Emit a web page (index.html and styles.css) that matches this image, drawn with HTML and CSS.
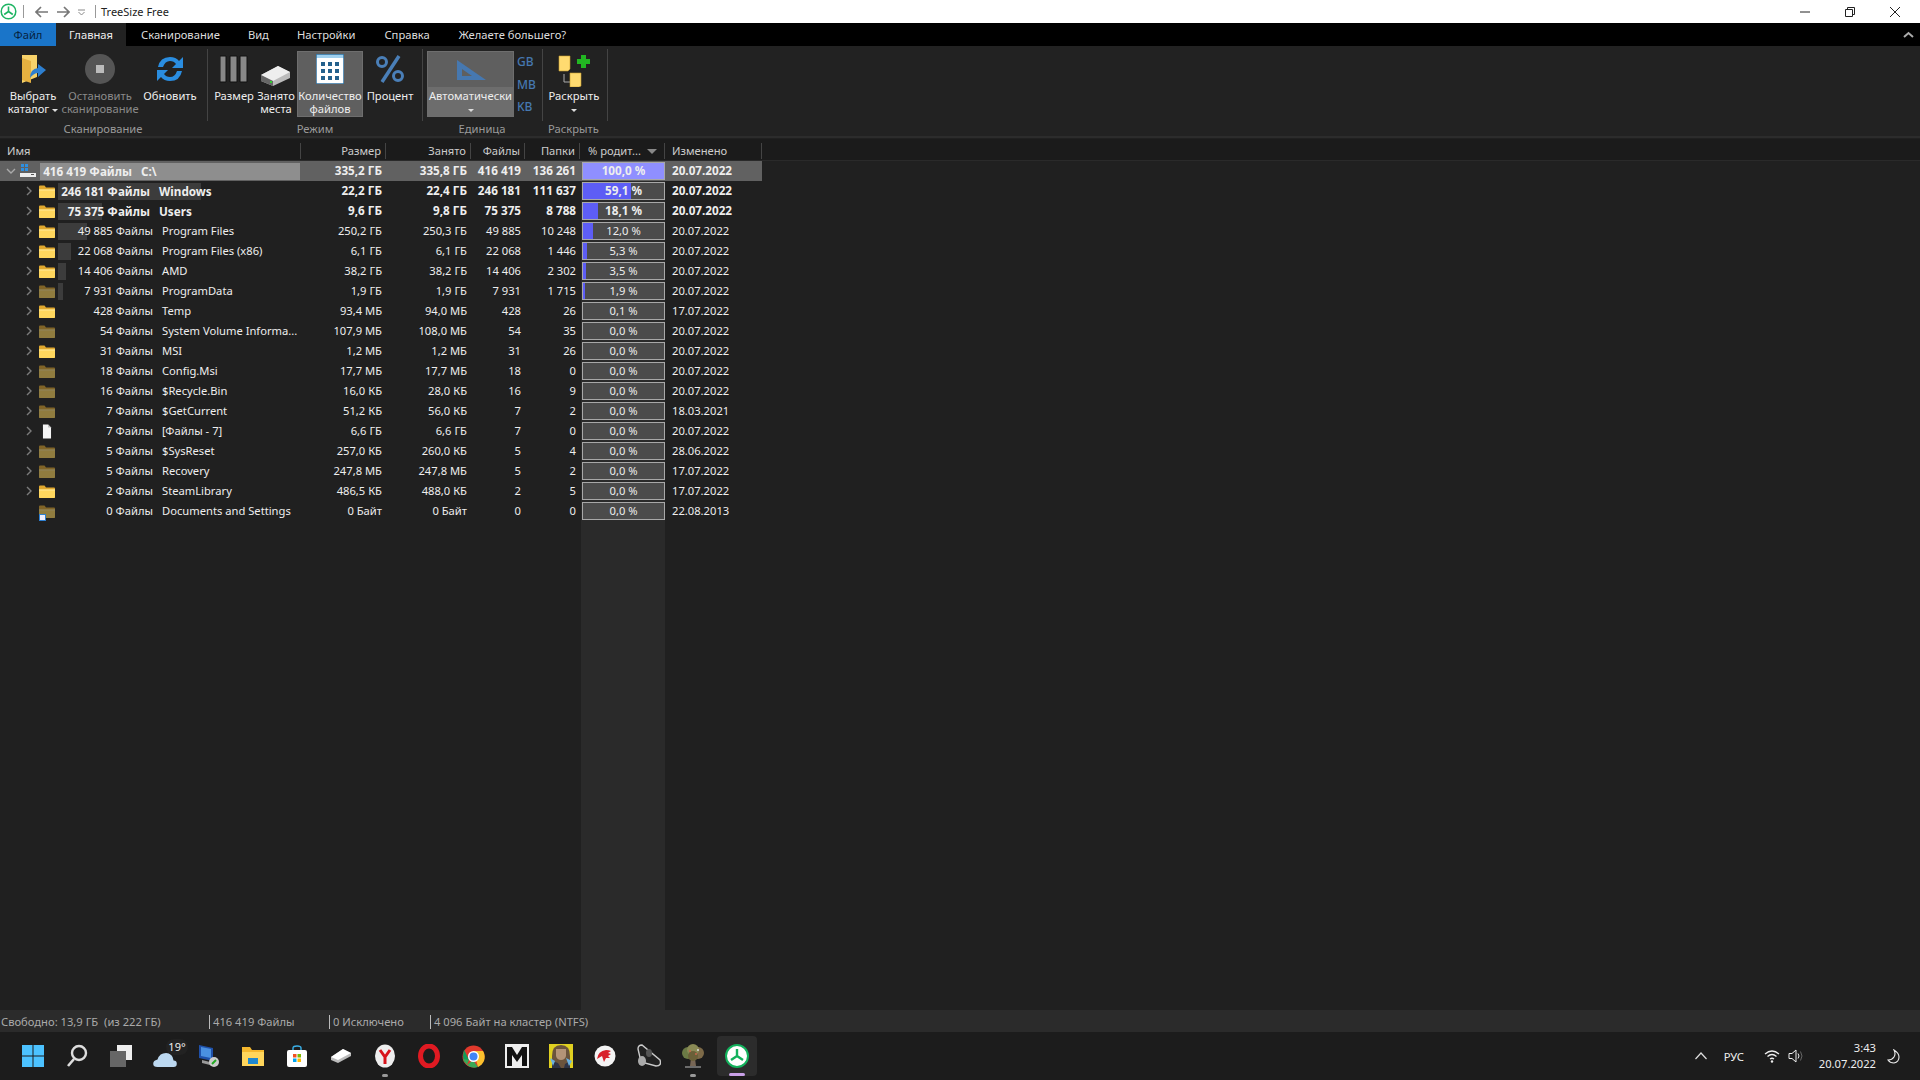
FILE: index.html
```html
<!DOCTYPE html>
<html lang="ru">
<head>
<meta charset="UTF-8" />
<title>TreeSize Free</title>
<link rel="stylesheet" href="styles.css">
</head>
<body>

<svg class="defs" width="0" height="0">
  <symbol id="folder" viewBox="0 0 16 13">
    <path d="M0 1.5q0-1 1-1h4.5l1.5 2h8q1 0 1 1V12q0 1-1 1H1q-1 0-1-1z" fill="#e0a82e"/>
    <path d="M0 4.5h16V12q0 1-1 1H1q-1 0-1-1z" fill="#ffd75e"/>
    <path d="M0 4.5h16v1H0z" fill="#ffe99a"/>
  </symbol>
  <symbol id="arrowRight" viewBox="0 0 7 10"><path d="M1 1l4 4-4 4" fill="none" stroke="#7b7b7b" stroke-width="1.4"/></symbol>
  <symbol id="doc" viewBox="0 0 16 26"><path d="M1 1h9l5 5v19H1z" fill="#f4f4f4"/><path d="M10 1v5h5z" fill="#bbb"/></symbol>
</svg>

<div class="titlebar">
  <svg class="appicon" width="17" height="17" viewBox="0 0 17 17"><circle cx="8.5" cy="8.5" r="7.3" fill="#fff" stroke="#1db462" stroke-width="1.5"/><path d="M8.5 3.5v5M8.5 8.5l-4.3 3M8.5 8.5l4.3 3" stroke="#1db462" stroke-width="1.6" fill="none"/></svg>
  <span class="tbsep"></span>
  <svg class="navarrow" width="14" height="12" viewBox="0 0 14 12"><path d="M6 1L1 6l5 5M1 6h12" fill="none" stroke="#777" stroke-width="1.7"/></svg>
  <svg class="navarrow" width="14" height="12" viewBox="0 0 14 12"><path d="M8 1l5 5-5 5M13 6H1" fill="none" stroke="#777" stroke-width="1.7"/></svg>
  <svg class="navdown" width="7" height="7" viewBox="0 0 7 7"><path d="M0 1h7M.5 3l3 3 3-3" fill="none" stroke="#888"/></svg>
  <span class="tbsep"></span>
  <span class="apptitle">TreeSize Free</span>
  <div class="wincontrols">
    <svg width="46" height="14" viewBox="0 0 46 14"><path d="M18 7h10" stroke="#222"/></svg>
    <svg width="46" height="14" viewBox="0 0 46 14"><path d="M18.500 4.500h7v7h-7zM20.500 4.500v-2h7v7h-2" fill="none" stroke="#222"/></svg>
    <svg width="46" height="14" viewBox="0 0 46 14"><path d="M18 2l10 10M28 2L18 12" stroke="#222"/></svg>
  </div>
</div>

<div class="tabbar">
  <span class="tab tabfile">Файл</span>
  <span class="tab tabactive">Главная</span>
  <span class="tab">Сканирование</span>
  <span class="tab">Вид</span>
  <span class="tab">Настройки</span>
  <span class="tab">Справка</span>
  <span class="tab">Желаете большего?</span>
  <svg class="collapse" width="11" height="7" viewBox="0 0 11 7"><path d="M1 6l4.500-4 4.500 4" fill="none" stroke="#aaa" stroke-width="2"/></svg>
</div>

<div class="ribbon">
  <div class="group groupscan">
    <div class="btns">
      <div class="rbtn wpick">
        <svg class="ricon" width="28" height="30" viewBox="0 0 28 30"><path d="M3 1h15v22L3 29z" fill="#f7d26a"/><path d="M3 4l9 3v22l-9-3z" fill="#e5b040"/><path d="M11 24q0-9 8-10v-4l8 6-8 7v-4q-4 0-8 5z" fill="#2d7fd0"/></svg>
        <span class="rtext">Выбрать<br>каталог <i class="caret"></i></span>
      </div>
      <div class="rbtn wstop disabled">
        <svg class="ricon" width="30" height="30" viewBox="0 0 30 30"><circle cx="15" cy="15" r="15" fill="#555"/><rect x="11" y="11" width="8" height="8" fill="#bbb"/></svg>
        <span class="rtext">Остановить<br>сканирование</span>
      </div>
      <div class="rbtn wrefresh">
        <svg class="ricon" width="30" height="30" viewBox="0 0 30 30"><path d="M3 13Q5 3 15 3q6 0 9 4l4-4v11H17l4-4q-2-3-6-3-5 0-7 6zM27 17q-2 10-12 10-6 0-9-4l-4 4V16h11l-4 4q2 3 6 3 5 0 7-6z" fill="#2a8de0"/></svg>
        <span class="rtext">Обновить</span>
      </div>
    </div>
    <div class="glabel">Сканирование</div>
  </div>
  <div class="group groupmode">
    <div class="btns">
      <div class="rbtn wsize">
        <svg class="ricon" width="28" height="28" viewBox="0 0 28 28"><path d="M0 1h6v26H0zM10 1h7v26h-7zM20 1h7v26h-7z" fill="#888" stroke="#111"/></svg>
        <span class="rtext">Размер</span>
      </div>
      <div class="rbtn wsize">
        <svg class="ricon lowicon" width="30" height="20" viewBox="0 0 30 20"><path d="M0 9L17 0l12 6v6L12 20 0 15z" fill="#bbb"/><path d="M0 9l12 6 17-9-12-6z" fill="#eee"/><path d="M0 9l12 6v5L0 15z" fill="#666"/><rect x="9" y="15" width="2" height="2" fill="#3c3"/></svg>
        <span class="rtext">Занято<br>места</span>
      </div>
      <div class="rbtn wcount selected">
        <svg class="ricon" width="28" height="30" viewBox="0 0 28 30"><rect width="28" height="30" fill="#fff"/><rect width="28" height="4" fill="#9fd0ef"/><path d="M0 0h28v30H0z" fill="none" stroke="#2e6f9e" stroke-width="1.500"/><path d="M5 8h4v4H5zM12 8h4v4h-4zM19 8h4v4h-4zM5 15h4v4H5zM12 15h4v4h-4zM19 15h4v4h-4zM5 22h4v4H5zM12 22h4v4h-4zM19 22h4v4h-4z" fill="#23608c"/></svg>
        <span class="rtext">Количество<br>файлов</span>
      </div>
      <div class="rbtn wpercent">
        <svg class="ricon" width="28" height="28" viewBox="0 0 28 28"><path d="M23 1L6 27" stroke="#4a7fb8" stroke-width="3.500"/><circle cx="6" cy="7" r="4.500" fill="none" stroke="#4a7fb8" stroke-width="3"/><circle cx="22" cy="21" r="4.500" fill="none" stroke="#4a7fb8" stroke-width="3"/></svg>
        <span class="rtext">Процент</span>
      </div>
    </div>
    <div class="glabel">Режим</div>
  </div>
  <div class="group groupunit">
    <div class="btns">
      <div class="rbtn wauto selected autobtn">
        <svg class="ricon" width="30" height="20" viewBox="0 0 30 20"><path fill-rule="evenodd" d="M1 0l29 20H1zM6 9v7h10z" fill="#4678b0"/></svg>
        <span class="rtext">Автоматически<br><i class="caret"></i></span>
      </div>
      <div class="units"><span>GB</span><span>MB</span><span>KB</span></div>
    </div>
    <div class="glabel">Единица</div>
  </div>
  <div class="group groupexpand">
    <div class="btns">
      <div class="rbtn wexpand">
        <svg class="ricon bigicon" width="32" height="33" viewBox="0 0 32 33"><path d="M6 20v8h6" fill="none" stroke="#aaa"/><path d="M1 2h11v13l-2 2H1zM12 19h11v13l-2 1H12z" fill="#ffdb70" stroke="#c8a030" stroke-width=".6"/><path d="M19 5h4V1h5v4h4v5h-4v4h-5v-4h-4z" fill="#22b722"/></svg>
        <span class="rtext">Раскрыть<br><i class="caret"></i></span>
      </div>
    </div>
    <div class="glabel">Раскрыть</div>
  </div>
</div>

<div class="treearea">
  <div class="pctcolumn"></div>

  <div class="row head">
    <div class="c name">Имя</div>
    <div class="c num">Размер</div>
    <div class="c num">Занято</div>
    <div class="c num">Файлы</div>
    <div class="c num">Папки</div>
    <div class="c pcthead">% родит...<i class="sortmark"></i></div>
    <div class="c date">Изменено</div>
  </div>

  <div class="row root bold">
    <div class="c name">
      <svg class="exp rootexp" width="10" height="7" viewBox="0 0 10 7"><path d="M1 1l4 4 4-4" fill="none" stroke="#aaa" stroke-width="1.400"/></svg>
      <svg class="ic" width="16" height="14" viewBox="0 0 16 14"><rect x="1" y="0" width="3" height="3" fill="#2d8fe0"/><rect x="5" y="0" width="3" height="3" fill="#2d8fe0"/><rect x="1" y="4" width="3" height="3" fill="#2d8fe0"/><rect x="5" y="4" width="3" height="3" fill="#2d8fe0"/><path d="M0 9h16v4H0z" fill="#eee"/><rect x="11" y="10" width="3" height="1" fill="#555"/></svg>
      <span class="count rootcount"><i class="bar" style="width:260px"></i>416 419 Файлы</span>
      <span class="label">C:\</span>
    </div>
    <div class="c num">335,2 ГБ</div><div class="c num">335,8 ГБ</div><div class="c num">416 419</div><div class="c num">136 261</div>
    <div class="c pct"><div class="meter"><i style="width:100%"></i><span>100,0 %</span></div></div>
    <div class="c date">20.07.2022</div>
  </div>

  <div class="row bold">
    <div class="c name"><svg class="exp"><use href="#arrowRight"/></svg><svg class="ic"><use href="#folder"/></svg>
      <span class="count"><i class="bar" style="width:143px"></i>246 181 Файлы</span><span class="label">Windows</span></div>
    <div class="c num">22,2 ГБ</div><div class="c num">22,4 ГБ</div><div class="c num">246 181</div><div class="c num">111 637</div>
    <div class="c pct"><div class="meter"><i style="width:59.1%"></i><span>59,1 %</span></div></div>
    <div class="c date">20.07.2022</div>
  </div>
  <div class="row bold">
    <div class="c name"><svg class="exp"><use href="#arrowRight"/></svg><svg class="ic"><use href="#folder"/></svg>
      <span class="count"><i class="bar" style="width:44px"></i>75 375 Файлы</span><span class="label">Users</span></div>
    <div class="c num">9,6 ГБ</div><div class="c num">9,8 ГБ</div><div class="c num">75 375</div><div class="c num">8 788</div>
    <div class="c pct"><div class="meter"><i style="width:18.1%"></i><span>18,1 %</span></div></div>
    <div class="c date">20.07.2022</div>
  </div>
  <div class="row">
    <div class="c name"><svg class="exp"><use href="#arrowRight"/></svg><svg class="ic"><use href="#folder"/></svg>
      <span class="count"><i class="bar" style="width:29px"></i>49 885 Файлы</span><span class="label">Program Files</span></div>
    <div class="c num">250,2 ГБ</div><div class="c num">250,3 ГБ</div><div class="c num">49 885</div><div class="c num">10 248</div>
    <div class="c pct"><div class="meter"><i style="width:12%"></i><span>12,0 %</span></div></div>
    <div class="c date">20.07.2022</div>
  </div>
  <div class="row">
    <div class="c name"><svg class="exp"><use href="#arrowRight"/></svg><svg class="ic"><use href="#folder"/></svg>
      <span class="count"><i class="bar" style="width:13px"></i>22 068 Файлы</span><span class="label">Program Files (x86)</span></div>
    <div class="c num">6,1 ГБ</div><div class="c num">6,1 ГБ</div><div class="c num">22 068</div><div class="c num">1 446</div>
    <div class="c pct"><div class="meter"><i style="width:5.3%"></i><span>5,3 %</span></div></div>
    <div class="c date">20.07.2022</div>
  </div>
  <div class="row">
    <div class="c name"><svg class="exp"><use href="#arrowRight"/></svg><svg class="ic"><use href="#folder"/></svg>
      <span class="count"><i class="bar" style="width:8px"></i>14 406 Файлы</span><span class="label">AMD</span></div>
    <div class="c num">38,2 ГБ</div><div class="c num">38,2 ГБ</div><div class="c num">14 406</div><div class="c num">2 302</div>
    <div class="c pct"><div class="meter"><i style="width:3.5%"></i><span>3,5 %</span></div></div>
    <div class="c date">20.07.2022</div>
  </div>
  <div class="row">
    <div class="c name"><svg class="exp"><use href="#arrowRight"/></svg><svg class="ic dim"><use href="#folder"/></svg>
      <span class="count"><i class="bar" style="width:5px"></i>7 931 Файлы</span><span class="label">ProgramData</span></div>
    <div class="c num">1,9 ГБ</div><div class="c num">1,9 ГБ</div><div class="c num">7 931</div><div class="c num">1 715</div>
    <div class="c pct"><div class="meter"><i style="width:1.9%"></i><span>1,9 %</span></div></div>
    <div class="c date">20.07.2022</div>
  </div>
  <div class="row">
    <div class="c name"><svg class="exp"><use href="#arrowRight"/></svg><svg class="ic"><use href="#folder"/></svg>
      <span class="count">428 Файлы</span><span class="label">Temp</span></div>
    <div class="c num">93,4 МБ</div><div class="c num">94,0 МБ</div><div class="c num">428</div><div class="c num">26</div>
    <div class="c pct"><div class="meter"><span>0,1 %</span></div></div>
    <div class="c date">17.07.2022</div>
  </div>
  <div class="row">
    <div class="c name"><svg class="exp"><use href="#arrowRight"/></svg><svg class="ic dim"><use href="#folder"/></svg>
      <span class="count">54 Файлы</span><span class="label">System Volume Informa...</span></div>
    <div class="c num">107,9 МБ</div><div class="c num">108,0 МБ</div><div class="c num">54</div><div class="c num">35</div>
    <div class="c pct"><div class="meter"><span>0,0 %</span></div></div>
    <div class="c date">20.07.2022</div>
  </div>
  <div class="row">
    <div class="c name"><svg class="exp"><use href="#arrowRight"/></svg><svg class="ic"><use href="#folder"/></svg>
      <span class="count">31 Файлы</span><span class="label">MSI</span></div>
    <div class="c num">1,2 МБ</div><div class="c num">1,2 МБ</div><div class="c num">31</div><div class="c num">26</div>
    <div class="c pct"><div class="meter"><span>0,0 %</span></div></div>
    <div class="c date">20.07.2022</div>
  </div>
  <div class="row">
    <div class="c name"><svg class="exp"><use href="#arrowRight"/></svg><svg class="ic dim"><use href="#folder"/></svg>
      <span class="count">18 Файлы</span><span class="label">Config.Msi</span></div>
    <div class="c num">17,7 МБ</div><div class="c num">17,7 МБ</div><div class="c num">18</div><div class="c num">0</div>
    <div class="c pct"><div class="meter"><span>0,0 %</span></div></div>
    <div class="c date">20.07.2022</div>
  </div>
  <div class="row">
    <div class="c name"><svg class="exp"><use href="#arrowRight"/></svg><svg class="ic dim"><use href="#folder"/></svg>
      <span class="count">16 Файлы</span><span class="label">$Recycle.Bin</span></div>
    <div class="c num">16,0 КБ</div><div class="c num">28,0 КБ</div><div class="c num">16</div><div class="c num">9</div>
    <div class="c pct"><div class="meter"><span>0,0 %</span></div></div>
    <div class="c date">20.07.2022</div>
  </div>
  <div class="row">
    <div class="c name"><svg class="exp"><use href="#arrowRight"/></svg><svg class="ic dim"><use href="#folder"/></svg>
      <span class="count">7 Файлы</span><span class="label">$GetCurrent</span></div>
    <div class="c num">51,2 КБ</div><div class="c num">56,0 КБ</div><div class="c num">7</div><div class="c num">2</div>
    <div class="c pct"><div class="meter"><span>0,0 %</span></div></div>
    <div class="c date">18.03.2021</div>
  </div>
  <div class="row">
    <div class="c name"><svg class="exp"><use href="#arrowRight"/></svg><svg class="ic docic"><use href="#doc"/></svg>
      <span class="count">7 Файлы</span><span class="label">[Файлы - 7]</span></div>
    <div class="c num">6,6 ГБ</div><div class="c num">6,6 ГБ</div><div class="c num">7</div><div class="c num">0</div>
    <div class="c pct"><div class="meter"><span>0,0 %</span></div></div>
    <div class="c date">20.07.2022</div>
  </div>
  <div class="row">
    <div class="c name"><svg class="exp"><use href="#arrowRight"/></svg><svg class="ic dim"><use href="#folder"/></svg>
      <span class="count">5 Файлы</span><span class="label">$SysReset</span></div>
    <div class="c num">257,0 КБ</div><div class="c num">260,0 КБ</div><div class="c num">5</div><div class="c num">4</div>
    <div class="c pct"><div class="meter"><span>0,0 %</span></div></div>
    <div class="c date">28.06.2022</div>
  </div>
  <div class="row">
    <div class="c name"><svg class="exp"><use href="#arrowRight"/></svg><svg class="ic dim"><use href="#folder"/></svg>
      <span class="count">5 Файлы</span><span class="label">Recovery</span></div>
    <div class="c num">247,8 МБ</div><div class="c num">247,8 МБ</div><div class="c num">5</div><div class="c num">2</div>
    <div class="c pct"><div class="meter"><span>0,0 %</span></div></div>
    <div class="c date">17.07.2022</div>
  </div>
  <div class="row">
    <div class="c name"><svg class="exp"><use href="#arrowRight"/></svg><svg class="ic"><use href="#folder"/></svg>
      <span class="count">2 Файлы</span><span class="label">SteamLibrary</span></div>
    <div class="c num">486,5 КБ</div><div class="c num">488,0 КБ</div><div class="c num">2</div><div class="c num">5</div>
    <div class="c pct"><div class="meter"><span>0,0 %</span></div></div>
    <div class="c date">17.07.2022</div>
  </div>
  <div class="row">
    <div class="c name"><span class="exp"></span><span class="linkwrap"><svg class="ic dim"><use href="#folder"/></svg><i class="linkbadge"></i></span>
      <span class="count">0 Файлы</span><span class="label">Documents and Settings</span></div>
    <div class="c num">0 Байт</div><div class="c num">0 Байт</div><div class="c num">0</div><div class="c num">0</div>
    <div class="c pct"><div class="meter"><span>0,0 %</span></div></div>
    <div class="c date">22.08.2013</div>
  </div>
</div>

<div class="statusbar">
  <span class="st st1">Свободно: 13,9 ГБ&nbsp; (из 222 ГБ)</span>
  <span class="st st2">416 419 Файлы</span>
  <span class="st st3">0 Исключено</span>
  <span class="st">4 096 Байт на кластер (NTFS)</span>
</div>

<div class="taskbar">
  <div class="tbicon"><svg width="22" height="22" viewBox="0 0 22 22"><path d="M0 0h10.500v10.500H0zM11.500 0H22v10.500H11.500zM0 11.500h10.500V22H0zM11.500 11.500H22V22H11.500z" fill="#4cc2ff"/></svg></div>
  <div class="tbicon"><svg width="22" height="24" viewBox="0 0 22 24"><circle cx="13" cy="9" r="7" fill="none" stroke="#ddd" stroke-width="2.400"/><path d="M8 15l-6 7" stroke="#ddd" stroke-width="2.600"/></svg></div>
  <div class="tbicon"><svg width="22" height="22" viewBox="0 0 22 22"><rect x="7" width="15" height="15" fill="#eee"/><rect y="6" width="16" height="16" fill="#666"/></svg></div>
  <div class="tbicon weather"><svg width="24" height="15" viewBox="0 0 22 14"><path d="M4 14q-4 0-4-3t4-4q2-6 8-6 6 0 7 7 3 0 3 3t-3 3z" fill="#bcd8f0"/></svg><span class="temp">19°</span></div>
  <div class="tbicon"><svg width="22" height="24" viewBox="0 0 22 24"><path d="M1 1l14 3v13L1 14z" fill="#1f50a8"/><path d="M3 3l10 2v9L3 12z" fill="#4a90e0"/><path d="M4 16l8 2v3l-8-2z" fill="#999"/><circle cx="16" cy="18" r="5" fill="#ccc"/><path d="M14 20l4-4" stroke="#2a2" stroke-width="2"/></svg></div>
  <div class="tbicon"><svg width="22" height="20" viewBox="0 0 22 20"><path d="M0 1h8l2 3h12v16H0z" fill="#f5b82e"/><path d="M0 6h22v14H0z" fill="#ffd65c"/><path d="M6 12h10v6H6z" fill="#1f88d0"/></svg></div>
  <div class="tbicon"><svg width="20" height="22" viewBox="0 0 20 22"><path d="M6 5V3q0-2 4-2t4 2v2" fill="none" stroke="#3ab0e8" stroke-width="1.400"/><rect y="5" width="20" height="17" rx="2" fill="#fff"/><path d="M6 9h3.500v3.500H6z" fill="#f25022"/><path d="M10.500 9H14v3.500h-3.500z" fill="#7fba00"/><path d="M6 13.500h3.500V17H6z" fill="#00a4ef"/><path d="M10.500 13.500H14V17h-3.500z" fill="#ffb900"/></svg></div>
  <div class="tbicon"><svg width="20" height="14" viewBox="0 0 20 14"><path d="M0 8l12-8 8 4v3L7 14 0 11z" fill="#bbb"/><path d="M0 8l7 3L20 4 12 0z" fill="#fff"/></svg></div>
  <div class="tbicon running"><svg width="22" height="24" viewBox="0 0 22 24"><ellipse cx="11" cy="12" rx="10" ry="11.500" fill="#eee"/><path d="M6 6l5 7 5-7M11 13v7" fill="none" stroke="#d8141c" stroke-width="3"/></svg></div>
  <div class="tbicon"><svg width="22" height="24" viewBox="0 0 22 24"><ellipse cx="11" cy="12" rx="8.500" ry="10" fill="none" stroke="#e01a22" stroke-width="5"/></svg></div>
  <div class="tbicon"><svg width="23" height="23" viewBox="0 0 23 23"><circle cx="11.500" cy="11.500" r="11" fill="#e0392c"/><path d="M11.500 6H21a11 11 0 0 1-5 16z" fill="#fbc02d"/><path d="M2 4.500L7 15 2 17 1 11z" fill="#0f9d58"/><path d="M5 20l6-5 5 7q-6 2-11-2zM1 14l6 1-2 5q-3-3-4-6z" fill="#3aa757"/><circle cx="11.500" cy="11.500" r="5.500" fill="#fff"/><circle cx="11.500" cy="11.500" r="4" fill="#4285f4"/></svg></div>
  <div class="tbicon"><svg width="24" height="24" viewBox="0 0 24 24"><rect width="24" height="24" fill="#eee"/><path d="M2 3h5l5 8 5-8h5v19h-5V11l-5 7-5-7v11H2z" fill="#111"/></svg></div>
  <div class="tbicon"><svg width="24" height="24" viewBox="0 0 24 24"><rect width="24" height="24" fill="#e0d020"/><path d="M3 24V12Q3 1 12 1t9 11v12z" fill="#6b543c"/><path d="M7 5h10v7q-1 4-5 4t-5-4z" fill="#b49478"/><path d="M3 24v-7l6 2 3 5zM21 24v-7l-5 3-1 4z" fill="#2e3344"/><path d="M17 14l6 3-3 5z" fill="#6ab0e0"/><path d="M1 14l5 3-2 5z" fill="#6ab0e0"/></svg></div>
  <div class="tbicon"><svg width="22" height="22" viewBox="0 0 22 22"><circle cx="11" cy="11" r="10.500" fill="#f4f4f4"/><path d="M3 14q1-8 9-9 3 0 5 1l-3 2 3 1-3 2 2 2-4 0-2 4-2-6z" fill="#d8202a"/></svg></div>
  <div class="tbicon"><svg width="24" height="24" viewBox="0 0 24 24"><path d="M1 5q0-4 4-4l18 15q2 6-4 6L4 18z" fill="#222" stroke="#ccc" stroke-width="1.400"/><ellipse cx="5" cy="17" rx="4" ry="5" fill="#aaa"/><ellipse cx="12" cy="9" rx="3" ry="4" fill="#555"/></svg></div>
  <div class="tbicon running"><svg width="24" height="24" viewBox="0 0 24 24"><path d="M10 14h4l1 8H9z" fill="#765"/><circle cx="7" cy="9" r="6" fill="#6b7a45"/><circle cx="17" cy="9" r="6" fill="#7d6a48"/><circle cx="12" cy="6" r="6" fill="#8a8a55"/><circle cx="12" cy="12" r="5" fill="#6a6038"/><circle cx="9" cy="7" r="1" fill="#c8664c"/><circle cx="15" cy="10" r="1" fill="#c8664c"/><circle cx="17" cy="6" r="1" fill="#ddd"/><path d="M4 23h16" stroke="#bbb"/></svg></div>
  <div class="tbicon activeapp"><svg width="24" height="24" viewBox="0 0 24 24"><circle cx="12" cy="12" r="11" fill="#fff" stroke="#12b15c" stroke-width="2"/><path d="M12 5v7M12 12l-6 4M12 12l6 4" stroke="#12b15c" stroke-width="2.400" fill="none"/></svg></div>

  <div class="tray">
    <svg class="chev" width="14" height="8" viewBox="0 0 13 8"><path d="M1 7l5.500-6 5.500 6" fill="none" stroke="#ddd" stroke-width="1.200"/></svg>
    <span class="lang">РУС</span>
    <svg width="16" height="14" viewBox="0 0 16 14"><path d="M1 5q7-6 14 0M3.500 7.500q4.500-4 9 0M6 10q2-1.500 4 0" fill="none" stroke="#eee" stroke-width="1.300"/><circle cx="8" cy="12.500" r="1.200" fill="#eee"/></svg>
    <svg class="vol" width="16" height="14" viewBox="0 0 16 14"><path d="M1 4.500h3L8 1v12L4 9.500H1z" fill="none" stroke="#eee"/><path d="M10 4.500q2 2.500 0 5" fill="none" stroke="#eee"/><path d="M12.500 2.500q3 4.500 0 9" fill="none" stroke="#666"/></svg>
    <div class="clock"><div>3:43</div><div>20.07.2022</div></div>
    <svg class="moon" width="13" height="15" viewBox="0 0 13 15"><path d="M7 1q5 3 5 7 0 5-5 6-4 0-6-3 4 0 6-3 2-3 0-7z" fill="none" stroke="#eee" stroke-width="1.100"/></svg>
  </div>
</div>

</body>
</html>
```

FILE: styles.css
```css
html, body {
  margin: 0;
  padding: 0;
}
body {
  width: 1920px;
  height: 1080px;
  overflow: hidden;
  display: flex;
  flex-direction: column;
  background-color: #202020;
  color: #eee;
  font-family: "Noto Sans", "Open Sans", sans-serif;
  font-size: 11.2px;
}
.defs {
  position: absolute;
}
i {
  font-style: normal;
}

/* title bar */
.titlebar {
  height: 23px;
  background-color: white;
  color: #222;
  display: flex;
  align-items: center;
  font-size: 11px;
}
.tbsep {
  width: 1px;
  height: 13px;
  background-color: #999;
  margin: 0 11px 0 6px;
}
.navarrow {
  margin-right: 7px;
}
.navdown {
  margin: 2px 4px 0 1px;
}
.apptitle {
  margin-left: -6px;
}
.wincontrols {
  margin-left: auto;
  display: flex;
  margin-right: 2px;
}
.wincontrols svg {
  margin-left: -1px;
}

/* tabs */
.tabbar {
  height: 23px;
  background-color: black;
  display: flex;
  align-items: center;
  position: relative;
}
.tab {
  line-height: 23px;
  color: #ddd;
}
.tabfile {
  width: 56px;
  text-align: center;
  background-color: #1a75c9;
  color: #06233f;
}
.tabactive {
  width: 70px;
  margin-right: 15px;
  text-align: center;
  background-color: #222;
  color: #eee;
}
.tab:nth-child(3) { margin-right: 28px; }
.tab:nth-child(4) { margin-right: 28px; }
.tab:nth-child(5) { margin-right: 29px; }
.tab:nth-child(6) { margin-right: 29px; }
.collapse {
  position: absolute;
  right: 6px;
  top: 8px;
}

/* ribbon */
.ribbon {
  height: 90px;
  background-color: #222;
  display: flex;
  border-bottom: 2px solid #2c2c2c;
}
.group {
  display: flex;
  flex-direction: column;
  box-sizing: border-box;
  padding-top: 5px;
  position: relative;
}
.group::after {
  content: "";
  position: absolute;
  right: 0;
  top: 3px;
  height: 72px;
  width: 1px;
  background-color: #444;
}
.groupscan { width: 208px; padding-left: 4px; }
.groupmode { width: 215px; padding-left: 5px; }
.groupunit { width: 120px; padding-left: 4px; }
.groupexpand { width: 65px; }
.btns {
  display: flex;
  height: 66px;
}
.glabel {
  text-align: center;
  color: #9a9a9a;
  margin-top: 4px;
  margin-right: 6px;
  line-height: 16px;
}
.groupexpand .glabel {
  margin-right: 4px;
}
.rbtn {
  display: flex;
  flex-direction: column;
  align-items: center;
  box-sizing: border-box;
  height: 66px;
  padding-top: 3px;
  text-align: center;
  line-height: 13px;
  color: #eee;
  white-space: nowrap;
}
.ricon {
  height: 30px;
  flex: none;
  margin-bottom: 5px;
}
.lowicon {
  margin-top: 12px;
  height: 20px;
  margin-bottom: 3px;
}
.bigicon {
  height: 33px;
  margin-bottom: 2px;
}
.wpick { width: 58px; }
.wstop { width: 76px; }
.wrefresh { width: 64px; }
.wsize { width: 42px; }
.wcount { width: 66px; }
.wpercent { width: 54px; }
.wauto { width: 87px; }
.wexpand { width: 62px; }
.disabled .rtext { color: #8a8a8a; }
.selected {
  background-color: #5f5f5f;
  outline: 1px solid #6e6e6e;
  outline-offset: -1px;
}
.autobtn {
  padding-top: 9px;
}
.autobtn .ricon {
  height: 20px;
  margin-bottom: 7px;
}
.autobtn .rtext {
  background-color: #6d6d6d;
  align-self: stretch;
  padding-top: 2px;
  height: 28px;
}
.caret {
  display: inline-block;
  width: 0;
  height: 0;
  border: 3px solid transparent;
  border-top: 3px solid #ddd;
  border-bottom: 0;
  vertical-align: middle;
}
.units {
  display: flex;
  flex-direction: column;
  justify-content: space-between;
  margin-left: 3px;
  color: #4678b0;
  font-size: 12px;
  font-weight: 500;
  padding: 2px 0 0;
  height: 62px;
}

/* tree list */
.treearea {
  flex: 1;
  position: relative;
  padding-top: 1px;
}
.pctcolumn {
  position: absolute;
  left: 581px;
  width: 84px;
  top: 22px;
  bottom: 0;
  background-color: #2a2a2a;
}
.row {
  display: grid;
  grid-template-columns: 301px 85px 85px 54px 55px 85px 97px;
  width: 762px;
  height: 20px;
  line-height: 20px;
  position: relative;
  white-space: nowrap;
}
.head {
  height: 22px;
  width: 1920px;
  grid-template-columns: 301px 85px 85px 54px 55px 85px 97px 1fr;
  background-color: #1b1b1b;
  color: #ccc;
  border-bottom: 1px solid #2a2a2a;
  box-sizing: border-box;
}
.head .c {
  border-right: 1px solid #444;
  height: 16px;
  line-height: 16px;
  align-self: center;
  margin-top: 2px;
}
.head .name {
  padding-left: 7px;
  display: block;
}
.head .pcthead {
  padding-left: 8px;
  position: relative;
}
.sortmark {
  position: absolute;
  right: 7px;
  top: 6px;
  border: 5px solid transparent;
  border-top: 5px solid #888;
  border-bottom: 0;
}
.c {
  box-sizing: border-box;
}
.num {
  text-align: right;
  padding-right: 4px;
}
.date {
  padding-left: 7px;
}
.name {
  display: flex;
  align-items: center;
  position: relative;
  isolation: isolate;
}
.bold {
  font-weight: 700;
  font-size: 11.7px;
  line-height: 18px;
}
.root {
  background-color: #616161;
}
.exp {
  width: 7px;
  height: 10px;
  margin-left: 26px;
  margin-right: 6px;
  flex: none;
}
.rootexp {
  width: 10px;
  height: 7px;
  margin-left: 6px;
  margin-right: 4px;
}
.ic {
  width: 16px;
  height: 13px;
  flex: none;
}
.root .ic {
  height: 14px;
}
.dim {
  opacity: .5;
}
.docic {
  height: 15px;
}
.linkwrap {
  position: relative;
  display: flex;
}
.linkbadge {
  position: absolute;
  left: 0;
  bottom: -3px;
  width: 7px;
  height: 7px;
  background-color: #eef;
  border: 1px solid #2d7fd0;
  box-sizing: border-box;
}
.count {
  position: relative;
  width: 95px;
  margin-left: 3px;
  text-align: right;
  flex: none;
}
.rootcount {
  width: 92px;
  margin-left: 4px;
}
.bold .count {
  width: 92px;
}
.bar {
  position: absolute;
  left: 0;
  top: 2px;
  bottom: 1px;
  background-color: #3c3c3c;
  z-index: -1;
}
.bold .bar {
  top: 1px;
  bottom: 0;
}
.root .bar {
  background-color: #8e8e8e;
}
.label {
  margin-left: 9px;
}
.pct {
  padding: 1px 0 0 2px;
}
.meter {
  width: 83px;
  height: 18px;
  box-sizing: border-box;
  border: 1px solid #a8a8a8;
  background-color: #4b4b4b;
  position: relative;
  text-align: center;
  line-height: 16px;
}
.bold .meter {
  line-height: 14px;
}
.meter i {
  position: absolute;
  left: 0;
  top: 0;
  bottom: 0;
  background-color: #5d5df5;
}
.root .meter i {
  background-color: #8f8fff;
}
.meter span {
  position: relative;
}

/* status bar */
.statusbar {
  height: 22px;
  background-color: #2b2b2b;
  color: #aaa;
  display: flex;
  align-items: center;
  padding: 2px 0 0 1px;
  box-sizing: border-box;
}
.st {
  padding-left: 3px;
  border-left: 1px solid #bbb;
  height: 14px;
  line-height: 14px;
  box-sizing: border-box;
}
.st1 {
  border-left: 0;
  padding-left: 0;
  width: 208px;
}
.st2 {
  width: 120px;
}
.st3 {
  width: 101px;
}

/* task bar */
.taskbar {
  height: 48px;
  background-color: #1c1c1c;
  display: flex;
  align-items: center;
  padding-left: 11px;
}
.tbicon {
  width: 44px;
  height: 40px;
  display: flex;
  align-items: center;
  justify-content: center;
  position: relative;
  flex: none;
}
.temp {
  position: absolute;
  left: 23px;
  top: 3px;
  width: 22px;
  height: 16px;
  background-color: #222;
  border-radius: 8px;
  font-size: 11px;
  line-height: 16px;
  text-align: center;
  color: #eee;
}
.weather svg {
  margin-top: 6px;
}
.running::after {
  content: "";
  position: absolute;
  bottom: -1px;
  left: 19px;
  width: 6px;
  height: 3px;
  border-radius: 2px;
  background-color: #999;
}
.activeapp {
  background-color: #2c2c2c;
  border-radius: 4px;
  width: 40px;
  margin-left: 2px;
}
.activeapp::after {
  content: "";
  position: absolute;
  bottom: 0;
  left: 12px;
  width: 16px;
  height: 3px;
  border-radius: 2px;
  background-color: #c9a0e8;
}
.tray {
  margin-left: auto;
  display: flex;
  align-items: center;
  color: #eee;
}
.chev {
  margin-right: 16px;
}
.lang {
  margin-right: 20px;
}
.vol {
  margin-left: 8px;
}
.clock {
  margin-left: 15px;
  text-align: right;
  line-height: 16px;
}
.moon {
  margin: 0 20px 0 11px;
}
```
